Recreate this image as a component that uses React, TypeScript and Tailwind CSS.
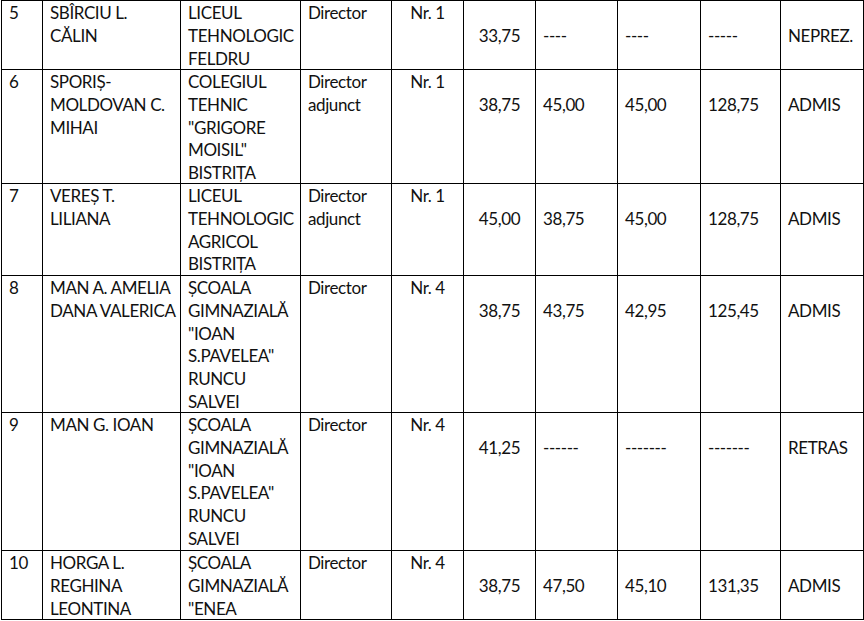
import React from "react";

type Row = {
  nr: string;
  name: string[];
  school: string[];
  func: string[];
  post: string;
  a: string;
  b: string;
  c: string;
  total: string;
  result: string;
};

const rows: Row[] = [
  { nr: "5", name: ["SBÎRCIU L.", "CĂLIN"], school: ["LICEUL", "TEHNOLOGIC", "FELDRU"], func: ["Director"], post: "Nr. 1", a: "33,75", b: "----", c: "----", total: "-----", result: "NEPREZ." },
  { nr: "6", name: ["SPORIȘ-", "MOLDOVAN C.", "MIHAI"], school: ["COLEGIUL", "TEHNIC", "\"GRIGORE", "MOISIL\"", "BISTRIȚA"], func: ["Director", "adjunct"], post: "Nr. 1", a: "38,75", b: "45,00", c: "45,00", total: "128,75", result: "ADMIS" },
  { nr: "7", name: ["VEREȘ T.", "LILIANA"], school: ["LICEUL", "TEHNOLOGIC", "AGRICOL", "BISTRIȚA"], func: ["Director", "adjunct"], post: "Nr. 1", a: "45,00", b: "38,75", c: "45,00", total: "128,75", result: "ADMIS" },
  { nr: "8", name: ["MAN A. AMELIA", "DANA VALERICA"], school: ["ȘCOALA", "GIMNAZIALĂ", "\"IOAN", "S.PAVELEA\"", "RUNCU", "SALVEI"], func: ["Director"], post: "Nr. 4", a: "38,75", b: "43,75", c: "42,95", total: "125,45", result: "ADMIS" },
  { nr: "9", name: ["MAN G. IOAN"], school: ["ȘCOALA", "GIMNAZIALĂ", "\"IOAN", "S.PAVELEA\"", "RUNCU", "SALVEI"], func: ["Director"], post: "Nr. 4", a: "41,25", b: "------", c: "-------", total: "-------", result: "RETRAS" },
  { nr: "10", name: ["HORGA L.", "REGHINA", "LEONTINA"], school: ["ȘCOALA", "GIMNAZIALĂ", "\"ENEA"], func: ["Director"], post: "Nr. 4", a: "38,75", b: "47,50", c: "45,10", total: "131,35", result: "ADMIS" },
];

function Lines({ lines }: { lines: string[] }) {
  return (
    <>
      {lines.map((l, i) => (
        <div key={i} className="whitespace-nowrap">{l}</div>
      ))}
    </>
  );
}

const cell = "bg-white px-[7px] pt-px overflow-hidden";
const numCell = "bg-white px-[7px] pt-[23.75px] whitespace-nowrap overflow-hidden";

export default function App() {
  return (
    <div className="w-[864px] h-[621px] bg-white overflow-hidden">
      <div
        className="ml-px grid w-[863px] gap-px bg-black p-px text-[17px] leading-[22.75px] tracking-[-0.4px] text-[#111]"
        style={{ fontFamily: "Lato, 'Noto Sans', sans-serif" }}
      >
        <div className="grid grid-cols-[40px_137px_119px_90px_71px_71px_81px_82px_79px_82px] grid-rows-[68px_113px_91px_136px_137px_68px] gap-px bg-black">
          {rows.map((r) => (
            <React.Fragment key={r.nr}>
              <div className={cell}>{r.nr}</div>
              <div className={cell}><Lines lines={r.name} /></div>
              <div className={cell}><Lines lines={r.school} /></div>
              <div className={cell}><Lines lines={r.func} /></div>
              <div className={cell + " text-center whitespace-nowrap"}>{r.post}</div>
              <div className={numCell + " text-center"}>{r.a}</div>
              <div className={numCell}>{r.b}</div>
              <div className={numCell}>{r.c}</div>
              <div className={numCell}>{r.total}</div>
              <div className={numCell}>{r.result}</div>
            </React.Fragment>
          ))}
        </div>
      </div>
    </div>
  );
}
